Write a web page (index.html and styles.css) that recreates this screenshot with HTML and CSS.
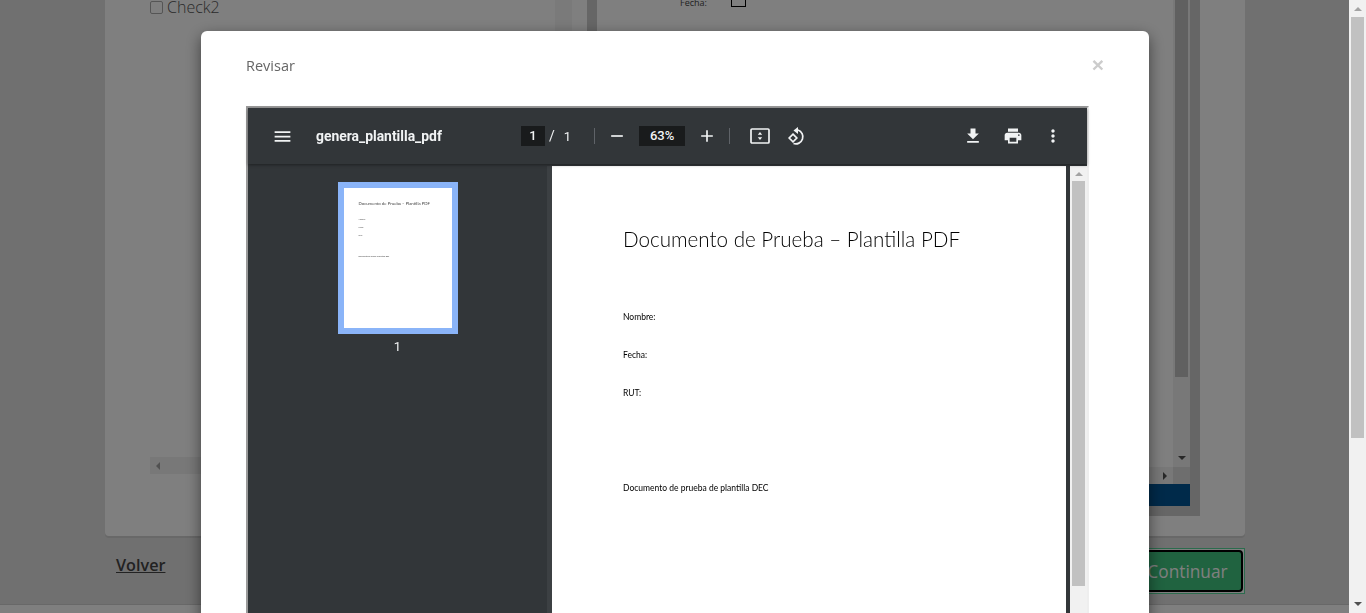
FILE: index.html
```html
<!DOCTYPE html>
<html lang="es">
<head>
<meta charset="UTF-8">
<title>Revisar</title>
<link rel="stylesheet" href="styles.css">
</head>
<body>

<div class="page">
	<div class="content">
		<div class="card">
			<div class="leftpane">
				<div class="leftbody">
					<div class="leftlist">
						<div class="checkrow"><span class="checkbox"></span>Check2</div>
					</div>
					<div class="vtrack"></div>
				</div>
				<div class="htrack"><span class="arrow-left"></span></div>
			</div>
			<div class="rightpane">
				<div class="rightbody">
					<div class="doc">
						<div class="fecharow"><span>Fecha:</span><span class="fechabox"></span></div>
					</div>
					<div class="vbar">
						<div class="vthumb"></div>
						<span class="arrow-down"></span>
					</div>
				</div>
				<div class="hbar"><span class="arrow-right"></span><span class="corner"></span></div>
				<div class="bluebar"></div>
			</div>
		</div>
		<div class="actions">
			<a class="volver" href="#">Volver</a>
			<div class="continuar-wrap"><button class="continuar">Continuar</button></div>
		</div>
	</div>
	<div class="pagebar">
		<span class="arrow-up"></span>
		<div class="pagethumb"></div>
		<span class="arrow-down"></span>
	</div>
</div>
<div class="footer"></div>

<div class="backdrop"></div>

<div class="modal">
	<div class="modal-head">
		<span class="modal-title">Revisar</span>
		<span class="close">×</span>
	</div>
	<div class="viewer">
		<div class="toolbar">
			<div class="tb-left">
				<svg class="ico ico-menu" viewBox="0 0 24 24"><path d="M3 18h18v-2H3v2zm0-5h18v-2H3v2zm0-7v2h18V6H3z"/></svg>
				<span class="filename">genera_plantilla_pdf</span>
			</div>
			<div class="tb-mid">
				<span class="numbox pagebox">1</span>
				<span class="slash">/</span>
				<span class="total">1</span>
				<span class="sep sep1"></span>
				<svg class="ico ico-minus" viewBox="0 0 24 24"><path d="M19 13H5v-2h14v2z"/></svg>
				<span class="numbox zoombox">63%</span>
				<svg class="ico ico-plus" viewBox="0 0 24 24"><path d="M19 13h-6v6h-2v-6H5v-2h6V5h2v6h6v2z"/></svg>
				<span class="sep sep2"></span>
				<svg class="ico ico-fit" viewBox="0 0 20 20"><rect class="stroke" x="1" y="3" width="18" height="14" rx="1"/><path d="M10 6l-2.200 2.800h4.400zM10 14l2.200-2.800H7.800z"/></svg>
				<svg class="ico ico-rotate" viewBox="0 0 20 20"><path class="stroke" d="M7 8.200L10.800 12 7 15.800 3.200 12z"/><path class="stroke" d="M12 4A7 7 0 1 1 7.500 17.500"/><path d="M12 1L7.500 4.500 12 8z"/></svg>
			</div>
			<div class="tb-right">
				<svg class="ico" viewBox="0 0 24 24"><path d="M19 9h-4V3H9v6H5l7 7 7-7zM5 18v2h14v-2H5z"/></svg>
				<svg class="ico" viewBox="0 0 24 24"><path d="M19 8H5c-1.660 0-3 1.340-3 3v6h4v4h12v-4h4v-6c0-1.660-1.340-3-3-3zm-3 11H8v-5h8v5zm3-7c-.55 0-1-.45-1-1s.45-1 1-1 1 .45 1 1-.45 1-1 1zm-1-9H6v4h12V3z"/></svg>
				<svg class="ico" viewBox="0 0 24 24"><path d="M12 8c1.100 0 2-.9 2-2s-.9-2-2-2-2 .9-2 2 .9 2 2 2zm0 2c-1.100 0-2 .9-2 2s.9 2 2 2 2-.9 2-2-.9-2-2-2zm0 6c-1.100 0-2 .9-2 2s.9 2 2 2 2-.9 2-2-.9-2-2-2z"/></svg>
			</div>
		</div>
		<div class="viewer-body">
			<div class="sidebar">
				<div class="thumb">
					<div class="thumb-title">Documento de Prueba – Plantilla PDF</div>
					<div class="thumb-line thumb-line-first">Nombre:</div>
					<div class="thumb-line">Fecha:</div>
					<div class="thumb-line">RUT:</div>
					<div class="thumb-foot">Documento de prueba de plantilla DEC</div>
				</div>
				<div class="thumb-num">1</div>
			</div>
			<div class="divider"></div>
			<div class="sheet">
				<h1>Documento de Prueba – Plantilla PDF</h1>
				<p class="field field-first">Nombre:</p>
				<p class="field">Fecha:</p>
				<p class="field">RUT:</p>
				<p class="field field-foot">Documento de prueba de plantilla DEC</p>
			</div>
			<div class="sheet-gap"></div>
			<div class="viewer-scroll">
				<span class="arrow-up"></span>
				<div class="viewer-thumb"></div>
			</div>
		</div>
	</div>
</div>

</body>
</html>
```

FILE: styles.css
```css
html, body {
	margin: 0;
	padding: 0;
	height: 613px;
	overflow: hidden;
}

body {
	background: #e1e1e1;
	font-family: "Open Sans", sans-serif;
	color: #555;
}

/* page behind the modal */
.page {
	display: flex;
	height: 604px;
}

.content {
	flex: 1;
	padding-left: 105px;
}

.card {
	width: 1140px;
	height: 536px;
	box-sizing: border-box;
	background: #fff;
	border-radius: 0 0 4px 4px;
	box-shadow: 0 2px 0 #d0d0d0;
	display: flex;
	padding-left: 45px;
}

.leftpane {
	width: 422px;
	height: 474px;
	display: flex;
	flex-direction: column;
}

.leftbody {
	flex: 1;
	display: flex;
	min-height: 0;
}

.leftlist {
	flex: 1;
}

.checkrow {
	display: flex;
	align-items: center;
	gap: 4px;
	height: 14px;
	font-size: 16px;
	font-weight: 300;
	line-height: 14px;
	color: #555;
}

.checkbox {
	width: 11px;
	height: 11px;
	border: 1px solid #aaa;
	border-radius: 2px;
}

.vtrack {
	width: 17px;
	background: #f5f5f5;
}

.htrack {
	height: 17px;
	background: #f1f1f1;
	display: flex;
	align-items: center;
	padding-left: 6px;
}

.rightpane {
	margin-left: 15px;
	width: 593px;
	height: 506px;
	border: solid #ccc;
	border-width: 0 10px 10px 10px;
	display: flex;
	flex-direction: column;
}

.rightbody {
	flex: 1;
	display: flex;
	min-height: 0;
}

.doc {
	flex: 1;
	padding-left: 83px;
}

.fecharow {
	display: flex;
	gap: 24px;
	height: 7px;
	font-size: 9px;
	line-height: 6px;
	color: #444;
}

.fechabox {
	width: 13px;
	height: 6px;
	border: 1px solid #000;
	border-top: 0;
}

.vbar {
	width: 17px;
	background: #f1f1f1;
	display: flex;
	flex-direction: column;
	align-items: center;
	padding-bottom: 7px;
	box-sizing: border-box;
}

.vthumb {
	width: 13px;
	height: 377px;
	background: #c1c1c1;
}

.vbar .arrow-down {
	margin-top: auto;
}

.hbar {
	height: 17px;
	background: #f1f1f1;
	display: flex;
	align-items: center;
	justify-content: flex-end;
}

.corner {
	width: 17px;
	height: 17px;
	margin-left: 6px;
	background: #dcdcdc;
}

.bluebar {
	height: 22px;
	background: #005494;
}

.actions {
	width: 1140px;
	height: 68px;
	display: flex;
	justify-content: space-between;
	align-items: center;
	padding-left: 11px;
	box-sizing: border-box;
}

.volver {
	margin-bottom: 10px;
	font-size: 16.200px;
	font-weight: 600;
	color: #444;
	text-decoration: underline;
}

.continuar-wrap {
	margin-top: 1px;
	border: 1px solid #58d89c;
	padding: 1px;
	background: #fff;
	display: flex;
}

.continuar {
	width: 111px;
	height: 42px;
	background: #40c680;
	border: 2px solid #000;
	border-radius: 4px;
	font-family: "Open Sans", sans-serif;
	font-size: 17.300px;
	color: #fff;
	padding: 1px 0 0;
}

/* browser scrollbar, stays above the backdrop */
.pagebar {
	position: relative;
	z-index: 10;
	width: 17px;
	height: 613px;
	background: #f1f1f1;
	display: flex;
	flex-direction: column;
	align-items: center;
	padding-top: 7px;
	padding-bottom: 7px;
	box-sizing: border-box;
	flex-shrink: 0;
}

.pagethumb {
	width: 13px;
	height: 421px;
	margin-top: 6px;
	background: #c1c1c1;
}

.pagebar .arrow-down {
	margin-top: auto;
}

.footer {
	height: 9px;
	background: #fff;
	border-top: 1px solid #d0d0d0;
	box-sizing: border-box;
}

/* scrollbar arrows */
.arrow-up, .arrow-down, .arrow-left, .arrow-right {
	display: block;
	width: 0;
	height: 0;
	border-style: solid;
	border-color: transparent;
}

.arrow-up {
	border-width: 0 4px 4px 4px;
	border-bottom-color: #a3a3a3;
}

.arrow-down {
	border-width: 4px 4px 0 4px;
	border-top-color: #505050;
}

.arrow-left {
	border-width: 4px 4px 4px 0;
	border-right-color: #a3a3a3;
}

.arrow-right {
	border-width: 4px 0 4px 4px;
	border-left-color: #505050;
}

.backdrop {
	position: fixed;
	top: 0;
	left: 0;
	right: 0;
	bottom: 0;
	background: rgba(0, 0, 0, .5);
}

.modal {
	position: fixed;
	top: 31px;
	left: 201px;
	width: 948px;
	height: 700px;
	background: #fff;
	border-radius: 6px;
	box-shadow: 0 5px 15px rgba(0, 0, 0, .5);
}

.modal-head {
	height: 75px;
	box-sizing: border-box;
	padding: 25px 45px 0;
	display: flex;
	justify-content: space-between;
}

.modal-title {
	font-size: 14.500px;
	line-height: 20px;
	color: #666;
}

.close {
	margin-top: -1px;
	font-size: 21px;
	line-height: 20px;
	font-family: "Liberation Sans", sans-serif;
	font-weight: bold;
	color: #ccc;
}

/* embedded pdf viewer */
.viewer {
	width: 843px;
	height: 600px;
	margin-left: 45px;
	box-sizing: border-box;
	border: 2px solid;
	border-color: #9a9a9a #eee #eee #9a9a9a;
	background: #323639;
	display: flex;
	flex-direction: column;
}

.toolbar {
	height: 56px;
	flex-shrink: 0;
	display: flex;
	align-items: center;
	color: #f1f3f4;
	box-shadow: 0 1px 3px rgba(0, 0, 0, .4);
	position: relative;
	z-index: 2;
}

.ico {
	width: 20px;
	height: 20px;
	fill: #f1f3f4;
	display: block;
	flex-shrink: 0;
}

.ico .stroke {
	fill: none;
	stroke: #f1f3f4;
	stroke-width: 1.700;
}

.ico-menu {
	width: 21px;
	height: 21px;
}

.tb-left {
	width: 249px;
	display: flex;
	align-items: center;
	padding-left: 24px;
	gap: 23px;
}

.filename {
	font-family: Roboto, sans-serif;
	font-size: 13.900px;
	font-weight: 700;
}

.tb-mid {
	display: flex;
	align-items: center;
	font-family: Roboto, sans-serif;
	font-size: 13px;
}

.numbox {
	background: #191b1c;
	height: 20px;
	line-height: 20px;
	text-align: center;
	font-weight: 500;
}

.pagebox {
	width: 24px;
}

.slash {
	margin-left: 4px;
	font-size: 14px;
}

.total {
	margin-left: 9px;
}

.sep {
	width: 1px;
	height: 16px;
	background: #5f6368;
}

.sep1 {
	margin-left: 23px;
}

.ico-minus {
	margin-left: 12px;
}

.zoombox {
	width: 46px;
	margin-left: 12px;
}

.ico-plus {
	margin-left: 12px;
}

.sep2 {
	margin-left: 12px;
}

.ico-fit {
	margin-left: 20px;
}

.ico-rotate {
	margin-left: 16px;
}

.tb-right {
	margin-left: auto;
	display: flex;
	gap: 20px;
	padding-right: 24px;
}

.viewer-body {
	flex: 1;
	display: flex;
	min-height: 0;
	margin-top: 2px;
}

.sidebar {
	width: 299px;
	display: flex;
	flex-direction: column;
	align-items: center;
	padding-top: 16px;
	box-sizing: border-box;
	flex-shrink: 0;
}

.thumb {
	width: 120px;
	height: 152px;
	background: #fff;
	border: 6px solid #8ab4f8;
	padding: 13px 15px;
	font-family: Lato, sans-serif;
	color: #444;
	font-size: 1.800px;
	box-sizing: border-box;
}

.thumb-title {
	font-size: 4.300px;
	line-height: 6px;
	white-space: nowrap;
}

.thumb-line {
	line-height: 2px;
	margin-bottom: 6px;
}

.thumb-line-first {
	margin-top: 11px;
}

.thumb-foot {
	margin-top: 19px;
	line-height: 2px;
	white-space: nowrap;
}

.thumb-num {
	margin-top: 5px;
	font-family: Roboto, sans-serif;
	font-size: 13px;
	line-height: 16px;
	color: #f1f3f4;
}

.divider {
	width: 5px;
	background: #3c4043;
	flex-shrink: 0;
}

.sheet {
	width: 514px;
	background: #fff;
	flex-shrink: 0;
	padding: 58px 0 0 71px;
	box-sizing: border-box;
	font-family: Lato, sans-serif;
	color: #000;
}

.sheet h1 {
	margin: 0;
	font-size: 20.600px;
	line-height: 30px;
	font-weight: 300;
}

.field {
	margin: 0 0 26px;
	font-size: 8.500px;
	line-height: 12px;
}

.field-first {
	margin-top: 57px;
}

.field-foot {
	margin-top: 83px;
}

.sheet-gap {
	width: 4px;
	flex-shrink: 0;
}

.viewer-scroll {
	width: 17px;
	background: #f1f1f1;
	display: flex;
	flex-direction: column;
	align-items: center;
	padding-top: 6px;
	flex-shrink: 0;
}

.viewer-thumb {
	width: 13px;
	height: 405px;
	margin-top: 5px;
	background: #c1c1c1;
}
```
